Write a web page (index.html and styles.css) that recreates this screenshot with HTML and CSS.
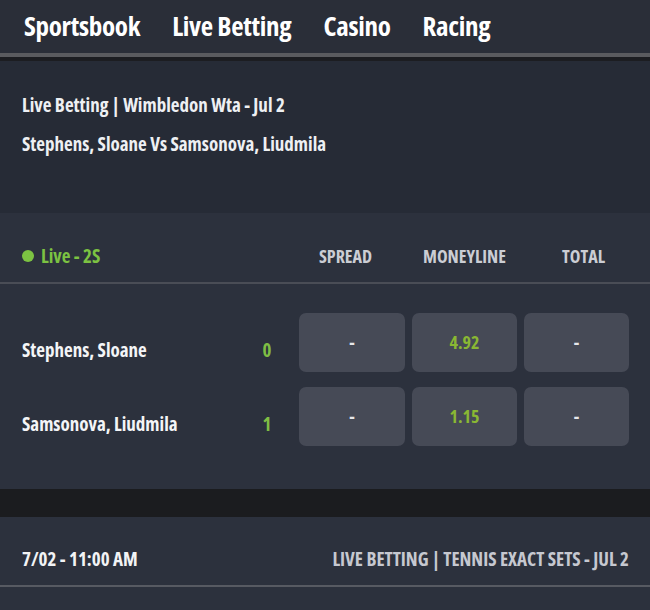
FILE: index.html
```html
<!DOCTYPE html>
<html lang="en">
<head>
<meta charset="utf-8">
<title>Live Betting</title>
<link rel="stylesheet" href="styles.css">
</head>
<body>
<nav class="nav">
  <a class="nav-item">Sportsbook</a>
  <a class="nav-item">Live Betting</a>
  <a class="nav-item">Casino</a>
  <a class="nav-item">Racing</a>
</nav>
<div class="nav-shadow"></div>

<section class="event-info">
  <div class="info-line">Live Betting | Wimbledon Wta - Jul 2</div>
  <div class="info-line">Stephens, Sloane Vs Samsonova, Liudmila</div>
</section>

<section class="market">
  <div class="market-head">
    <div class="live"><span class="dot"></span>Live - 2S</div>
    <div class="col-label">SPREAD</div>
    <div class="col-label">MONEYLINE</div>
    <div class="col-label">TOTAL</div>
  </div>
  <div class="rows">
    <div class="row">
      <div class="name">Stephens, Sloane</div>
      <div class="score">0</div>
      <div class="btn">-</div>
      <div class="btn odds">4.92</div>
      <div class="btn">-</div>
    </div>
    <div class="row">
      <div class="name">Samsonova, Liudmila</div>
      <div class="score">1</div>
      <div class="btn">-</div>
      <div class="btn odds">1.15</div>
      <div class="btn">-</div>
    </div>
  </div>
</section>

<div class="band"></div>

<section class="next">
  <div class="next-row">
    <div class="next-time">7/02 - 11:00 AM</div>
    <div class="next-title">LIVE BETTING | TENNIS EXACT SETS - JUL 2</div>
  </div>
</section>
</body>
</html>
```
FILE: styles.css
```css
* { box-sizing: border-box; }
html, body {
  margin: 0;
  padding: 0;
}
body {
  background: #2c313d;
  font-family: "Open Sans", "Roboto Condensed", sans-serif;
  font-stretch: 75%;
  font-weight: 700;
  color: #f0f1f4;
  width: 650px;
  height: 610px;
  overflow: hidden;
}

.nav {
  height: 57px;
  background: #2a2e38;
  display: flex;
  align-items: center;
  gap: 32px;
  padding: 0 24px 3px;
  border-bottom: 4px solid #5a5b5f;
}
.nav-item {
  color: #ffffff;
  font-size: 27px;
  letter-spacing: -0.3px;
}
.nav-shadow {
  height: 4px;
  background: #1c1d21;
}

.event-info {
  background: #262b36;
  padding: 25px 22px 49px;
  height: 152px;
}
.info-line {
  font-size: 19px;
  line-height: 39px;
  color: #eef0f3;
}

.market {
  background: #2c313d;
  height: 276px;
}
.market-head {
  display: grid;
  grid-template-columns: 1fr 119px 119px 119px;
  align-items: center;
  padding: 30px 7px 13px 22px;
  border-bottom: 2px solid #4a4d56;
}
.live {
  display: flex;
  align-items: center;
  gap: 7px;
  color: #7cc242;
  font-size: 19px;
  line-height: 26px;
}
.dot {
  width: 12px;
  height: 12px;
  border-radius: 50%;
  background: #7cc242;
}
.col-label {
  text-align: center;
  color: #cbcdd4;
  font-size: 18px;
  line-height: 26px;
}

.rows {
  display: flex;
  flex-direction: column;
  gap: 15px;
  padding: 29px 21px 0 22px;
}
.row {
  display: grid;
  grid-template-columns: 1fr 50px 106px 105px 105px;
  column-gap: 7px;
  align-items: center;
  height: 59px;
}
.name {
  font-size: 19px;
  color: #f4f5f7;
  padding-top: 15px;
}
.score {
  text-align: center;
  font-size: 19px;
  color: #7fbe44;
  padding-top: 15px;
}
.btn {
  height: 59px;
  border-radius: 7px;
  background: #464a56;
  display: flex;
  align-items: center;
  justify-content: center;
  color: #e6e7ea;
  font-size: 18px;
  padding-bottom: 2px;
}
.btn.odds {
  color: #8ab833;
}

.band {
  height: 28px;
  background: #1b1c1f;
}

.next {
  background: #2c313d;
  padding-top: 29px;
}
.next-row {
  display: flex;
  justify-content: space-between;
  align-items: center;
  padding: 0 21px 13px 22px;
  border-bottom: 2px solid #575a62;
  line-height: 26px;
  font-size: 19px;
}
.next-time {
  color: #f2f3f5;
}
.next-title {
  color: #c6c8d0;
}
```
